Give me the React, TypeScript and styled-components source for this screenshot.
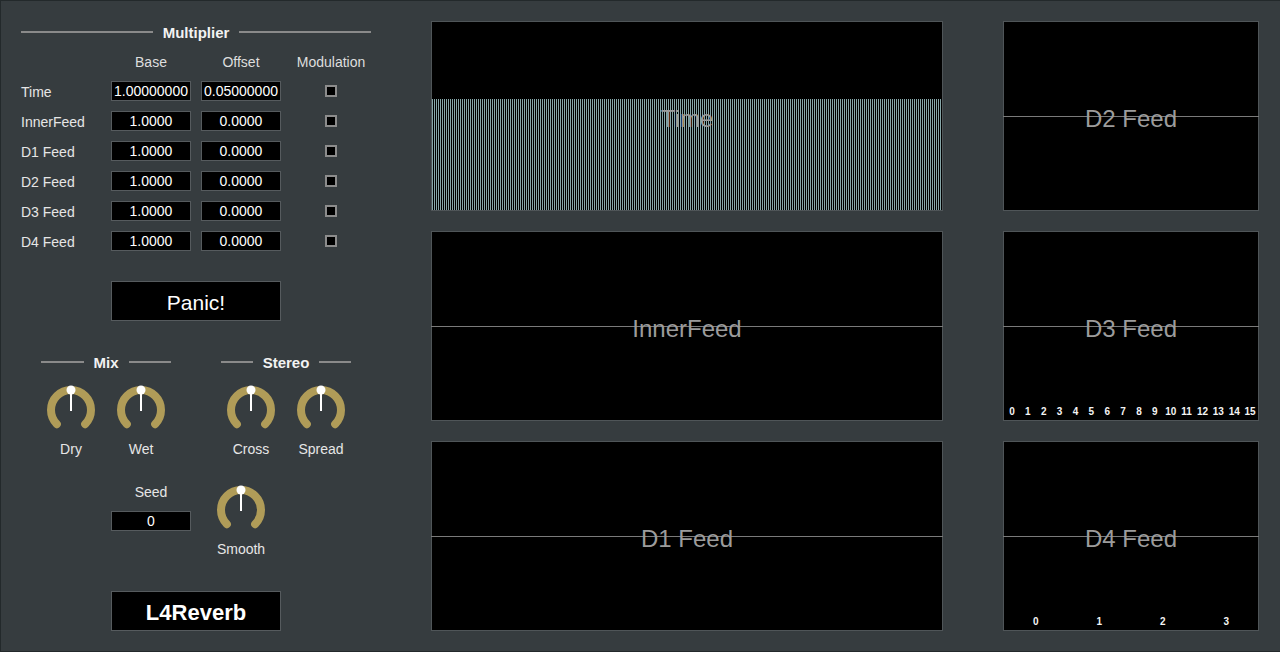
import React from "react";
import styled, { createGlobalStyle } from "styled-components";

const GlobalStyle = createGlobalStyle`
  html, body {
    margin: 0;
    padding: 0;
    background: #363c3f;
    font-family: "Liberation Sans", Arial, sans-serif;
  }
`;

const Frame = styled.div`
  box-sizing: border-box;
  width: 1280px;
  height: 652px;
  display: flex;
  gap: 60px;
  padding: 20px;
  background: #363c3f;
  border: 1px solid #23292b;
  border-right: 0;
`;

const LeftColumn = styled.div`
  width: 350px;
  display: flex;
  flex-direction: column;
  color: #e6e6e6;
  font-size: 14px;
`;

const SectionTitle = styled.div`
  height: 22px;
  display: flex;
  align-items: center;
  gap: 10px;
  font-size: 15px;
  font-weight: bold;
  color: #f2f2f2;

  &::before,
  &::after {
    content: "";
    flex: 1;
    height: 2px;
    margin-bottom: 1px;
    background: #8a8a8a;
  }
`;

const ParamGrid = styled.div`
  margin-top: 3px;
  display: grid;
  grid-template-columns: repeat(4, 80px);
  grid-auto-rows: 30px;
  column-gap: 10px;
  align-items: center;
`;

const HeaderCell = styled.div`
  padding-top: 2px;
  text-align: center;
  color: #dedede;
`;

const RowLabel = styled.div`
  padding-top: 2px;
  color: #e6e6e6;
`;

const ValueBox = styled.div<{ $top?: number }>`
  box-sizing: border-box;
  width: 80px;
  height: 20px;
  margin-top: ${(p) => p.$top ?? 0}px;
  background: #000;
  border: 1px solid #565b5e;
  color: #fff;
  font-size: 14px;
  line-height: 19px;
  text-align: center;
  white-space: nowrap;
  overflow: hidden;
`;

const CheckCell = styled.div`
  display: flex;
  justify-content: center;
`;

const CheckBox = styled.div`
  box-sizing: border-box;
  width: 12px;
  height: 12px;
  background: #000;
  border: 2px solid #8c8c8c;
`;

const ActionButton = styled.div<{ $top: number; $bold?: boolean }>`
  box-sizing: border-box;
  width: 170px;
  height: 40px;
  margin: ${(p) => p.$top}px 0 0 90px;
  padding-top: 4px;
  display: flex;
  align-items: center;
  justify-content: center;
  background: #000;
  border: 1px solid #565b5e;
  color: #fff;
  font-size: ${(p) => (p.$bold ? 22 : 21)}px;
  font-weight: ${(p) => (p.$bold ? "bold" : "normal")};
`;

const KnobSections = styled.div`
  margin-top: 30px;
  padding-left: 20px;
  display: flex;
  gap: 50px;
`;

const KnobGroup = styled.div`
  width: 130px;
  display: flex;
  flex-direction: column;
`;

const KnobRow = styled.div`
  margin-top: 12px;
  display: flex;
  gap: 10px;
`;

const KnobCell = styled.div<{ $w?: number; $top?: number }>`
  width: ${(p) => p.$w ?? 60}px;
  margin-top: ${(p) => p.$top ?? 0}px;
  display: flex;
  flex-direction: column;
  align-items: center;
`;

const KnobLabel = styled.div`
  margin-top: 6px;
  line-height: 16px;
  color: #e6e6e6;
`;

const UtilityRow = styled.div`
  margin-top: 27px;
  padding-left: 90px;
  display: flex;
  gap: 10px;
`;

const SeedCell = styled.div`
  width: 80px;
  display: flex;
  flex-direction: column;
  align-items: center;
`;

const SeedLabel = styled.div`
  line-height: 16px;
  color: #e6e6e6;
`;

const ScopeColumn = styled.div<{ $w: number }>`
  width: ${(p) => p.$w}px;
  display: flex;
  flex-direction: column;
  gap: 20px;
`;

const Scope = styled.div<{ $midline?: boolean }>`
  position: relative;
  box-sizing: border-box;
  height: 190px;
  display: flex;
  flex-direction: column;
  justify-content: flex-end;
  background: #000;
  border: 1px solid #4f5558;

  &::before {
    content: "";
    display: ${(p) => (p.$midline ? "block" : "none")};
    position: absolute;
    left: -1px;
    right: -1px;
    top: 94px;
    height: 1px;
    background: #7a7a7a;
  }
`;

const ScopeLabel = styled.div`
  position: absolute;
  left: 50%;
  top: 50%;
  transform: translate(-50%, -50%);
  margin-top: 3px;
  font-size: 24px;
  color: #9c9c9c;
  white-space: nowrap;
  pointer-events: none;
`;

const Bars = styled.div`
  height: 111px;
  background: repeating-linear-gradient(
    to right,
    #86a6a8 0px,
    #86a6a8 1px,
    #000 1px,
    #000 2px
  );
`;

const ChannelRow = styled.div<{ $count: number }>`
  display: grid;
  grid-template-columns: repeat(${(p) => p.$count}, 1fr);
  padding-bottom: 2px;
  font-size: 10px;
  font-weight: bold;
  line-height: 12px;
  color: #f4f4f4;
  text-align: center;
`;

const Knob: React.FC = () => (
  <svg width="50" height="50" viewBox="0 0 50 50">
    <path
      d="M 10.86 39.14 A 20 20 0 1 1 39.14 39.14"
      fill="none"
      stroke="#b09c58"
      strokeWidth="8"
      strokeLinecap="round"
    />
    <line x1="25" y1="26" x2="25" y2="5" stroke="#fff" strokeWidth="2" />
    <circle cx="25" cy="5" r="4.5" fill="#fff" />
  </svg>
);

const rows = [
  { name: "Time", base: "1.00000000", offset: "0.05000000" },
  { name: "InnerFeed", base: "1.0000", offset: "0.0000" },
  { name: "D1 Feed", base: "1.0000", offset: "0.0000" },
  { name: "D2 Feed", base: "1.0000", offset: "0.0000" },
  { name: "D3 Feed", base: "1.0000", offset: "0.0000" },
  { name: "D4 Feed", base: "1.0000", offset: "0.0000" },
];

const knobGroups = [
  { title: "Mix", knobs: ["Dry", "Wet"] },
  { title: "Stereo", knobs: ["Cross", "Spread"] },
];

const range = (n: number) => Array.from({ length: n }, (_, i) => i);

export default function App() {
  return (
    <>
      <GlobalStyle />
      <Frame>
        <LeftColumn>
          <SectionTitle>Multiplier</SectionTitle>
          <ParamGrid>
            <div />
            <HeaderCell>Base</HeaderCell>
            <HeaderCell>Offset</HeaderCell>
            <HeaderCell>Modulation</HeaderCell>
            {rows.map((r) => (
              <React.Fragment key={r.name}>
                <RowLabel>{r.name}</RowLabel>
                <ValueBox>{r.base}</ValueBox>
                <ValueBox>{r.offset}</ValueBox>
                <CheckCell>
                  <CheckBox />
                </CheckCell>
              </React.Fragment>
            ))}
          </ParamGrid>

          <ActionButton $top={25}>Panic!</ActionButton>

          <KnobSections>
            {knobGroups.map((g) => (
              <KnobGroup key={g.title}>
                <SectionTitle>{g.title}</SectionTitle>
                <KnobRow>
                  {g.knobs.map((k) => (
                    <KnobCell key={k}>
                      <Knob />
                      <KnobLabel>{k}</KnobLabel>
                    </KnobCell>
                  ))}
                </KnobRow>
              </KnobGroup>
            ))}
          </KnobSections>

          <UtilityRow>
            <SeedCell>
              <SeedLabel>Seed</SeedLabel>
              <ValueBox $top={11}>0</ValueBox>
            </SeedCell>
            <KnobCell $w={80} $top={1}>
              <Knob />
              <KnobLabel>Smooth</KnobLabel>
            </KnobCell>
          </UtilityRow>

          <ActionButton $top={34} $bold>
            L4Reverb
          </ActionButton>
        </LeftColumn>

        <ScopeColumn $w={512}>
          <Scope>
            <Bars />
            <ScopeLabel>Time</ScopeLabel>
          </Scope>
          <Scope $midline>
            <ScopeLabel>InnerFeed</ScopeLabel>
          </Scope>
          <Scope $midline>
            <ScopeLabel>D1 Feed</ScopeLabel>
          </Scope>
        </ScopeColumn>

        <ScopeColumn $w={256}>
          <Scope $midline>
            <ScopeLabel>D2 Feed</ScopeLabel>
          </Scope>
          <Scope $midline>
            <ScopeLabel>D3 Feed</ScopeLabel>
            <ChannelRow $count={16}>
              {range(16).map((i) => (
                <span key={i}>{i}</span>
              ))}
            </ChannelRow>
          </Scope>
          <Scope $midline>
            <ScopeLabel>D4 Feed</ScopeLabel>
            <ChannelRow $count={4}>
              {range(4).map((i) => (
                <span key={i}>{i}</span>
              ))}
            </ChannelRow>
          </Scope>
        </ScopeColumn>
      </Frame>
    </>
  );
}
